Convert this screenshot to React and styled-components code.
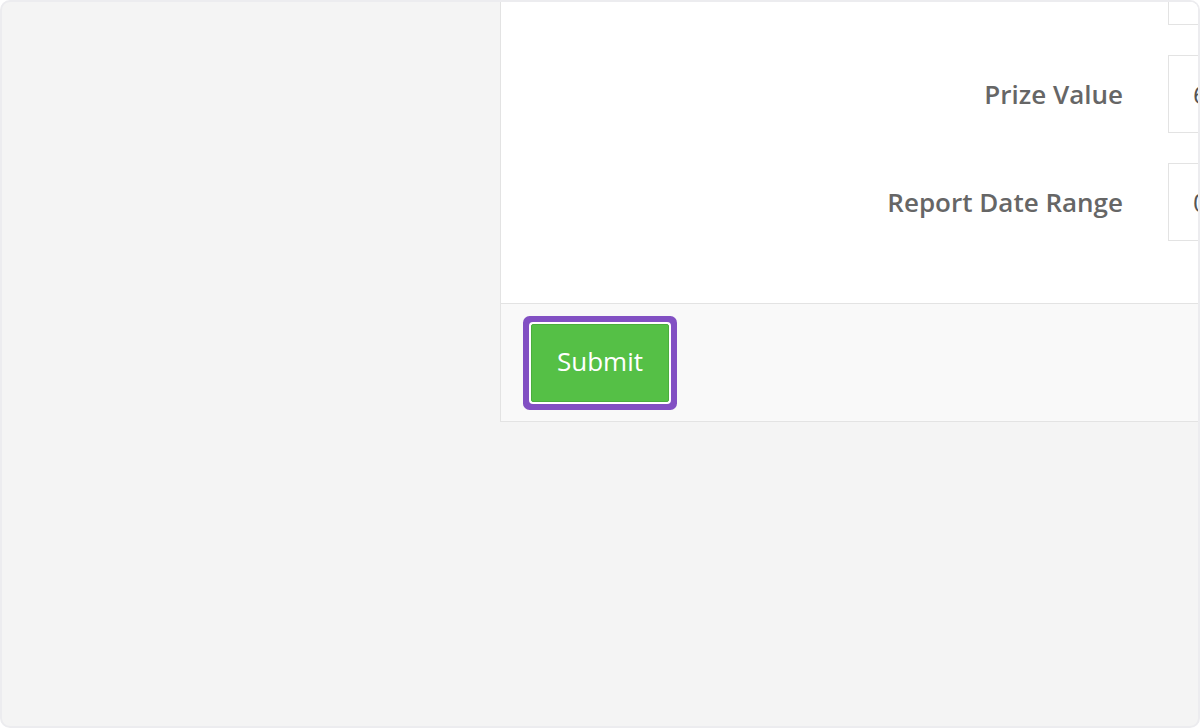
import React from "react";
import styled, { createGlobalStyle } from "styled-components";

const GlobalStyle = createGlobalStyle`
  html, body {
    margin: 0;
    padding: 0;
    background: #ffffff;
  }
  * {
    box-sizing: border-box;
  }
`;

const Frame = styled.div`
  width: 1200px;
  height: 728px;
  background: #f4f4f4;
  border: 2px solid #ececef;
  border-radius: 10px;
  overflow: hidden;
  font-family: "Open Sans", "Noto Sans", sans-serif;
`;

const Panel = styled.form`
  margin: -86px 0 0 498px;
  width: 1100px;
  background: #fff;
  border: 1px solid #e3e3e3;
`;

const Body = styled.div`
  display: grid;
  grid-template-columns: 622px 400px;
  column-gap: 45px;
  row-gap: 30px;
  padding: 30px 0 62px;
`;

const Label = styled.label`
  align-self: center;
  text-align: right;
  font-size: 26px;
  font-weight: 600;
  color: #666;
  line-height: 1.2;
  padding-top: 2px;
`;

const Input = styled.input`
  height: 78px;
  border: 1px solid #e3e3e3;
  padding: 0 24px;
  font-family: inherit;
  font-size: 26px;
  color: #555;
  background: #fff;
  outline: none;
`;

const Footer = styled.div`
  display: flex;
  align-items: center;
  padding: 20px 30px 19px;
  background: #f9f9f9;
  border-top: 1px solid #e3e3e3;
`;

const SubmitButton = styled.button`
  width: 138px;
  height: 78px;
  padding: 0 0 4px;
  border: 1px solid #4aae3d;
  border-radius: 2px;
  background: #55c046;
  color: #fff;
  font-family: inherit;
  font-size: 26px;
  cursor: pointer;
  box-shadow: 0 0 0 2px #fff, 0 0 0 8px #8250c3;
`;

const fields = [
  { id: "prize-name", label: "", value: "" },
  { id: "prize-value", label: "Prize Value", value: "650" },
  { id: "date-range", label: "Report Date Range", value: "01/01/2024 - 01/31/2024" },
];

export default function App() {
  return (
    <>
      <GlobalStyle />
      <Frame>
        <Panel onSubmit={(e) => e.preventDefault()}>
          <Body>
            {fields.map((f) => (
              <React.Fragment key={f.id}>
                <Label htmlFor={f.id}>{f.label}</Label>
                <Input id={f.id} defaultValue={f.value} />
              </React.Fragment>
            ))}
          </Body>
          <Footer>
            <SubmitButton type="submit">Submit</SubmitButton>
          </Footer>
        </Panel>
      </Frame>
    </>
  );
}
